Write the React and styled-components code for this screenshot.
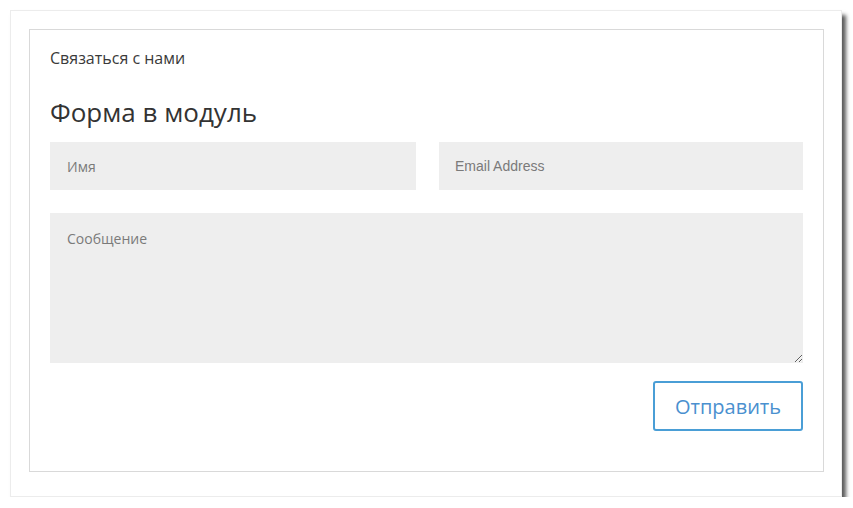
import React from 'react';
import styled, { createGlobalStyle } from 'styled-components';

const GlobalStyle = createGlobalStyle`
    body {
        margin: 0;
        background: #ffffff;
        font-family: "Open Sans", "Liberation Sans", sans-serif;
    }
`

const Frame = styled.div`
    width: 832px;
    height: 487px;
    margin: 10px 0 0 10px;
    box-sizing: border-box;
    padding: 18px 17px 24px 18px;
    background: #fff;
    border: 1px solid #ececec;
    box-shadow: 4px 5px 4px rgba(0, 0, 0, 0.65);
`

const Module = styled.div`
    box-sizing: border-box;
    height: 443px;
    border: 1px solid #d9d9d9;
    padding: 18px 20px 0 20px;
    display: flex;
    flex-direction: column;
`

const ModuleTitle = styled.div`
    font-size: 16px;
    line-height: 20px;
    color: #3a3a3a;
`

const Heading = styled.h3`
    margin: 26px 0 12px;
    font-size: 26px;
    line-height: 36px;
    font-weight: 400;
    color: #333;
`

const Row = styled.div`
    display: flex;
    gap: 23px;
    margin-bottom: 23px;
`

const Field = styled.input`
    flex: 1;
    min-width: 0;
    height: 48px;
    box-sizing: border-box;
    border: none;
    outline: none;
    background: #eeeeee;
    padding: 0 ${p => p.$pad || 17}px;
    font-family: ${p => p.$latin ? '"Liberation Sans", Arial' : '"Open Sans"'}, sans-serif;
    font-size: 14px;
    color: #555;

    &::placeholder {
        color: #7a7a7a;
    }
`

const Message = styled.textarea`
    display: block;
    width: 100%;
    height: 150px;
    box-sizing: border-box;
    border: none;
    outline: none;
    background: #eeeeee;
    padding: 16px 17px;
    font-family: "Open Sans", sans-serif;
    font-size: 14px;
    line-height: 20px;
    color: #555;
    resize: vertical;

    &::placeholder {
        color: #7a7a7a;
    }
`

const Actions = styled.div`
    display: flex;
    justify-content: flex-end;
    margin-top: 18px;
`

const SendButton = styled.button`
    width: 150px;
    height: 50px;
    box-sizing: border-box;
    background: #fff;
    border: 2px solid #4a9ed6;
    border-radius: 3px;
    font-family: "Open Sans", sans-serif;
    font-size: 20px;
    color: #4a90cf;
    cursor: pointer;
`

const App = () => {
    return (
        <>
            <GlobalStyle />
            <Frame>
                <Module>
                    <ModuleTitle>Связаться с нами</ModuleTitle>
                    <Heading>Форма в модуль</Heading>
                    <Row>
                        <Field placeholder="Имя" />
                        <Field placeholder="Email Address" $latin $pad={16} />
                    </Row>
                    <Message placeholder="Сообщение" />
                    <Actions>
                        <SendButton type="button">Отправить</SendButton>
                    </Actions>
                </Module>
            </Frame>
        </>
    );
};

export default App;
